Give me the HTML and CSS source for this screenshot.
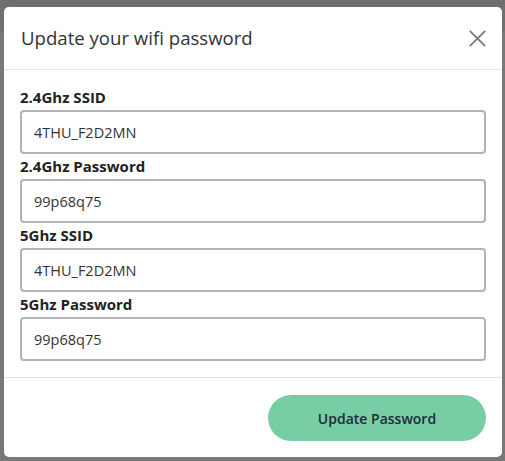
FILE: index.html
```html
<!DOCTYPE html>
<html lang="en">
<head>
<meta charset="utf-8">
<title>Update your wifi password</title>
<link rel="stylesheet" href="styles.css">
</head>
<body>
<div class="overlay">
  <div class="modal">
    <div class="modal-header">
      <h2 class="modal-title">Update your wifi password</h2>
      <button class="close" aria-label="Close">
        <svg width="17" height="17" viewBox="0 0 17 17"><path d="M0.8 0.8L16.2 16.2M16.2 0.8L0.8 16.2" stroke="#777" stroke-width="1.7" fill="none"/></svg>
      </button>
    </div>
    <div class="modal-body">
      <label class="field-label">2.4Ghz SSID</label>
      <input class="field-input" type="text" value="4THU_F2D2MN">
      <label class="field-label">2.4Ghz Password</label>
      <input class="field-input" type="text" value="99p68q75">
      <label class="field-label">5Ghz SSID</label>
      <input class="field-input" type="text" value="4THU_F2D2MN">
      <label class="field-label">5Ghz Password</label>
      <input class="field-input" type="text" value="99p68q75">
    </div>
    <div class="modal-footer">
      <button class="btn-primary">Update Password</button>
    </div>
  </div>
</div>
</body>
</html>
```
FILE: styles.css
```css
html, body {
  margin: 0;
  padding: 0;
}
body {
  width: 505px;
  height: 461px;
  overflow: hidden;
  font-family: "Open Sans", "Liberation Sans", sans-serif;
  background: linear-gradient(#6f6f6f 0, #6f6f6f 31px, #787878 31px, #787878 100%);
}
.overlay {
  box-sizing: border-box;
  height: 461px;
  padding: 7px 3px 4px 4px;
}
.modal {
  background: #fff;
  border-radius: 5px;
  height: 450px;
  display: flex;
  flex-direction: column;
  overflow: hidden;
}
.modal-header {
  box-sizing: border-box;
  height: 63px;
  border-bottom: 1px solid #e3e3e3;
  display: flex;
  align-items: center;
  justify-content: space-between;
  padding: 0 16px 0 17px;
}
.modal-title {
  margin: 0;
  font-size: 18.6px;
  font-weight: 400;
  color: #333;
  margin-top: -2px;
}
.close {
  border: 0;
  background: none;
  padding: 0;
  width: 17px;
  height: 17px;
  display: flex;
  margin-top: 0;
}
.modal-body {
  padding: 15px 16px 16px;
  display: flex;
  flex-direction: column;
  border-bottom: 1px solid #e3e3e3;
}
.field-label {
  font-size: 15px;
  font-weight: 700;
  color: #222;
  line-height: 25px;
  height: 25px;
}
.field-input {
  box-sizing: border-box;
  height: 44px;
  border: 2px solid #b3b3b3;
  border-radius: 4px;
  padding: 0 12px;
  font-family: "Open Sans", "Liberation Sans", sans-serif;
  font-size: 14.5px;
  color: #333;
  background: #fff;
  outline: none;
}
.modal-footer {
  flex: 1;
  display: flex;
  justify-content: flex-end;
  align-items: flex-start;
  padding: 17px 16px 0;
}
.btn-primary {
  width: 218px;
  height: 46px;
  border: 0;
  border-radius: 23px;
  background: #77cea5;
  color: #1f2a37;
  font-family: "Open Sans", "Liberation Sans", sans-serif;
  font-size: 14px;
  font-weight: 600;
}
```
